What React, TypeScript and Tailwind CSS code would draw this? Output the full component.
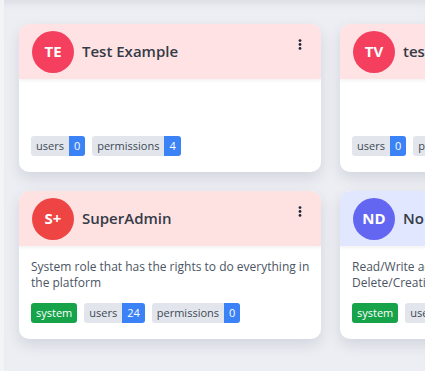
import React from "react";

type Role = {
  initials: string;
  name: string;
  desc?: string;
  headerBg: string;
  avatarBg: string;
  system?: boolean;
  users: number;
  perms: number;
};

const roles: Role[] = [
  { initials: "TE", name: "Test Example", headerBg: "bg-[#fee2e4]", avatarBg: "bg-[#f43f5e]", users: 0, perms: 4 },
  { initials: "TV", name: "test value", headerBg: "bg-[#fee2e4]", avatarBg: "bg-[#f43f5e]", users: 0, perms: 1 },
  {
    initials: "S+",
    name: "SuperAdmin",
    desc: "System role that has the rights to do everything in the platform",
    headerBg: "bg-[#fee2e2]",
    avatarBg: "bg-[#ef4444]",
    system: true,
    users: 24,
    perms: 0,
  },
  {
    initials: "ND",
    name: "No Delete",
    desc: "Read/Write access to all the resources, no Delete/Creation",
    headerBg: "bg-[#e0e7ff]",
    avatarBg: "bg-[#6366f1]",
    system: true,
    users: 3,
    perms: 0,
  },
];

function Count({ label, n }: { label: string; n: number }) {
  return (
    <span className="flex h-[20px] items-stretch overflow-hidden rounded-[3px] bg-[#e2e6ec] text-[11px] leading-[20px]">
      <span className="px-[5px] text-[#404854]">{label}</span>
      <span className="bg-[#3b82f6] px-[5px] text-white">{n}</span>
    </span>
  );
}

function Card({ r }: { r: Role }) {
  return (
    <div className="flex h-[148px] w-[302px] flex-col overflow-hidden rounded-[10px] bg-white shadow-[0_6px_14px_rgba(30,40,70,0.12)]">
      <div className={`relative flex h-[55px] shrink-0 items-center gap-[8px] pl-[13px] shadow-[0_2px_3px_rgba(0,0,0,0.05)] ${r.headerBg}`}>
        <div className={`flex h-[42px] w-[42px] items-center justify-center rounded-full text-[15px] font-bold text-white ${r.avatarBg}`}>
          {r.initials}
        </div>
        <div className="whitespace-nowrap text-[15px] font-semibold text-[#343b46]">{r.name}</div>
        <svg className="absolute right-[19px] top-[15px]" width="4" height="11" viewBox="0 0 4 11">
          <circle cx="2" cy="1.6" r="1.4" fill="#1f2937" />
          <circle cx="2" cy="5.5" r="1.4" fill="#1f2937" />
          <circle cx="2" cy="9.4" r="1.4" fill="#1f2937" />
        </svg>
      </div>
      <div className="flex flex-1 flex-col justify-between pb-[16px] pl-[12px] pr-[6px] pt-[13px]">
        <div className="text-[12px] leading-[16px] text-[#4b5563]">{r.desc ?? ""}</div>
        <div className="flex gap-[7px]">
          {r.system && (
            <span className="h-[20px] rounded-[3px] bg-[#16a34a] px-[5px] text-[11px] leading-[20px] text-white">system</span>
          )}
          <Count label="users" n={r.users} />
          <Count label="permissions" n={r.perms} />
        </div>
      </div>
    </div>
  );
}

export default function App() {
  return (
    <div
      className="h-[371px] w-[425px] overflow-hidden bg-[#f3f4f6] pl-[4px]"
      style={{ fontFamily: "'Open Sans', 'Noto Sans', sans-serif" }}
    >
      <div className="h-full overflow-hidden bg-[#eceef3] pl-[15px] pt-[24px] shadow-[inset_0_8px_8px_-6px_rgba(30,40,70,0.10)]">
        <div className="grid grid-cols-[302px_302px] gap-[19px]">
          {roles.map((r) => (
            <Card key={r.initials} r={r} />
          ))}
        </div>
      </div>
    </div>
  );
}
